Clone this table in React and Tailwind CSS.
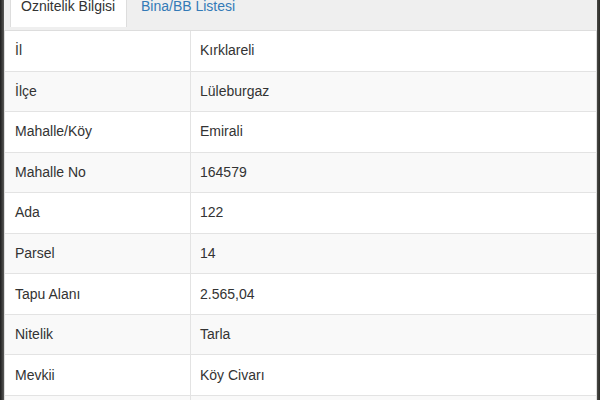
const rows = [
  ['İl', 'Kırklareli'],
  ['İlçe', 'Lüleburgaz'],
  ['Mahalle/Köy', 'Emirali'],
  ['Mahalle No', '164579'],
  ['Ada', '122'],
  ['Parsel', '14'],
  ['Tapu Alanı', '2.565,04'],
  ['Nitelik', 'Tarla'],
  ['Mevkii', 'Köy Civarı'],
  ['', ''],
];

export default function App() {
  return (
    <div className="w-[600px] h-[400px] overflow-hidden flex bg-[#2c2c2a] font-['Liberation_Sans',Arial,sans-serif] text-[14px] text-[#333]">
      <div className="w-[4px] shrink-0 bg-gradient-to-r from-[#1e1e1e] to-[#5a5a58]" />
      <div className="w-[593px] shrink-0 bg-white flex flex-col">
        <div className="h-[31px] shrink-0 flex bg-[#efefef] border-b border-[#ddd] pl-[6px]">
          <div className="w-[117px] h-[31px] -mb-[1px] bg-white border-x border-[#ddd] pl-[10px] leading-[20px] -mt-[4px] pt-0">
            Öznitelik Bilgisi
          </div>
          <div className="pl-[14px] leading-[20px] -mt-[4px] text-[#337ab7]">Bina/BB Listesi</div>
        </div>
        <div className="border-l border-r border-[#ddd]">
          {rows.map(([k, v], i) => (
            <div
              key={i}
              className={`h-[40.56px] flex border-b border-[#e3e3e3] ${i % 2 === 1 ? 'bg-[#f9f9f9]' : 'bg-white'}`}
            >
              <div className="w-[186px] shrink-0 flex items-center pl-[10px] border-r border-[#e3e3e3]">{k}</div>
              <div className="flex-1 flex items-center pl-[9px]">{v}</div>
            </div>
          ))}
        </div>
      </div>
      <div className="flex-1 bg-gradient-to-r from-[#4a4a46] to-[#2a2a26]" />
    </div>
  );
}
